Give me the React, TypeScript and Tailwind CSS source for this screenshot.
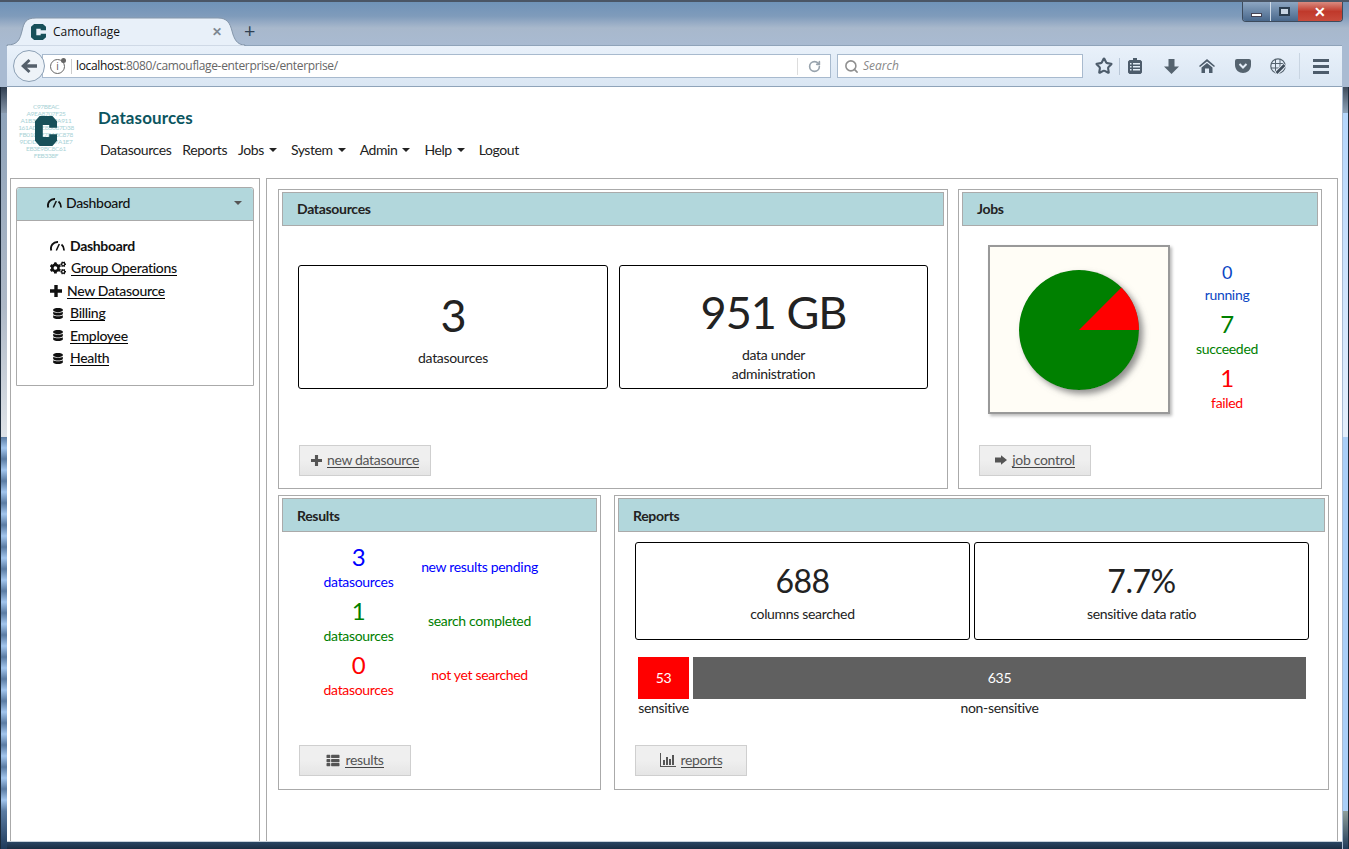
import React from 'react';
import { FaCogs, FaDatabase, FaThList } from 'react-icons/fa';
import { RotateCw, Search, Star } from 'lucide-react';

const CMark = ({ className }: { className: string }) => (
  <svg viewBox="0 0 24 28" preserveAspectRatio="none" className={className}>
    <path fill="#17505a" d="M5 0H19L24 5V11H15.500V8.500H8.500V19.500H15.500V17H24V23L19 28H5L0 23V5Z" />
  </svg>
);

const Gauge = () => (
  <svg viewBox="0 0 15 11" className="w-[15px] h-[11px] shrink-0">
    <path d="M1.300 10.500A6.500 6.500 0 0 1 8 2" fill="none" stroke="#111" strokeWidth="1.900" />
    <path d="M6.300 10.500L9.300 4" fill="none" stroke="#111" strokeWidth="1.500" />
    <path d="M11.500 4.500A6.500 6.500 0 0 1 13.800 10.500" fill="none" stroke="#111" strokeWidth="1.700" />
  </svg>
);

const PlusIcon = ({ className, color }: { className: string; color: string }) => (
  <svg viewBox="0 0 12 12" className={`shrink-0 ${className}`}>
    <path fill={color} d="M4.300 0H7.700V4.300H12V7.700H7.700V12H4.300V7.700H0V4.300H4.300Z" />
  </svg>
);

const ArrowIcon = () => (
  <svg viewBox="0 0 14 11" className="w-[12px] h-[10px] shrink-0">
    <path fill="#555" d="M0 2.500H7V0L14 5.500L7 11V8.500H0Z" />
  </svg>
);

const StatsIcon = () => (
  <svg viewBox="0 0 16 14" className="w-[16px] h-[14px] shrink-0">
    <path fill="#555" d="M0 0H1V13H16V14H0ZM3 7H5V12H3ZM6 4H8V12H6ZM9 6H11V12H9ZM12 2H14V12H12Z" />
  </svg>
);

const ClipboardIcon = () => (
  <svg viewBox="0 0 14 16" className="w-[14px] h-[16px]">
    <path fill="#4d5c6b" d="M5 0H9V2H12.500L14 3.500V14.500L12.500 16H1.500L0 14.500V3.500L1.500 2H5Z" />
    <path fill="#e4edf7" d="M2 5H3.500V6.500H2ZM5 5H12V6.500H5ZM2 8H3.500V9.500H2ZM5 8H12V9.500H5ZM2 11H3.500V12.500H2ZM5 11H12V12.500H5Z" />
  </svg>
);

const DownIcon = () => (
  <svg viewBox="0 0 15 15" className="w-[15px] h-[15px]">
    <path fill="#55636f" d="M4.500 0H10.500V7.500H15L7.500 15L0 7.500H4.500Z" />
  </svg>
);

const HomeIcon = () => (
  <svg viewBox="0 0 16 14" className="w-[16px] h-[14px]">
    <path fill="#4d5c6b" d="M8 0L16 7L15 8L8 2.500L1 8L0 7ZM8 4L13.500 8.500V14H10V9.500H6V14H2.500V8.500Z" />
  </svg>
);

const PocketIcon = () => (
  <svg viewBox="0 0 16 14" className="w-[16px] h-[14px]">
    <path fill="#55636f" d="M2 0H14Q16 0 16 2V6C16 11 12 14 8 14C4 14 0 11 0 6V2Q0 0 2 0Z" />
    <path d="M4.500 5L8 8.500L11.500 5" fill="none" stroke="#e4edf7" strokeWidth="2" />
  </svg>
);

const GlobeIcon = () => (
  <svg viewBox="0 0 16 16" className="w-[16px] h-[16px]">
    <circle cx="8" cy="8" r="7.200" fill="none" stroke="#55636f" strokeWidth="1.200" />
    <path d="M1 5.500H15M1 10H12M5.500 1V15M10 1V11" fill="none" stroke="#55636f" strokeWidth="1" />
    <path d="M6 15.500L15 6.500" fill="none" stroke="#e4edf7" strokeWidth="4.500" />
    <path d="M6.500 15L14.500 7" fill="none" stroke="#3f4d5a" strokeWidth="2.600" />
  </svg>
);

const Heading = ({ children, className = '' }: { children: React.ReactNode; className?: string }) => (
  <div className={`h-[34px] bg-[#b2d7dc] border border-[#aaa] pl-[14px] flex items-center font-bold text-[14px] text-[#222] ${className}`}>
    {children}
  </div>
);

const Panel = ({ className, children }: { className: string; children: React.ReactNode }) => (
  <div className={`border border-[#aaa] px-[3px] pt-[2px] ${className}`}>{children}</div>
);

const Btn = ({ icon, label, className }: { icon: React.ReactNode; label: string; className: string }) => (
  <div className={`h-[31px] border border-[#cfcfcf] bg-[linear-gradient(#efefef_50%,#e5e5e5)] flex items-center justify-center gap-[5px] pb-[1px] text-[14px] text-[#555] ${className}`}>
    {icon}
    <span className="border-b border-[#444] leading-[15px]">{label}</span>
  </div>
);

const StatBox = ({ value, lines, size, className }: { value: string; lines: string[]; size: string; className: string }) => (
  <div className={`border border-black rounded-[3px] flex flex-col items-center justify-center text-center ${className}`}>
    <div className={`${size} text-[#222]`}>{value}</div>
    <div className="text-[14px] leading-[19px] text-[#222]">
      {lines.map(l => <div key={l}>{l}</div>)}
    </div>
  </div>
);

const JobStat = ({ n, label, color, numClass, rowClass }: { n: string; label: string; color: string; numClass: string; rowClass: string }) => (
  <div className={`flex flex-col items-center ${rowClass} ${color}`}>
    <div className={numClass}>{n}</div>
    <div className="text-[14px] leading-[20px]">{label}</div>
  </div>
);

const ResultRow = ({ n, text, color }: { n: string; text: string; color: string }) => (
  <div className={`h-[54px] flex items-center ${color}`}>
    <div className="w-[153px] flex flex-col items-center">
      <div className="text-[24px] leading-[27px]">{n}</div>
      <div className="text-[14px] leading-[24px] mb-[3px]">datasources</div>
    </div>
    <div className="w-[131px] text-center text-[14px] whitespace-nowrap mb-[7px] ml-[-21px]">{text}</div>
  </div>
);

const SideItem = ({ icon, label, bold, gap }: { icon: React.ReactNode; label: string; bold?: boolean; gap: string }) => (
  <div className="h-[22.500px] flex items-center text-[14px] text-[#111]">
    <div className={`flex items-center ${gap}`}>
      {icon}
      {bold ? <span className="font-bold">{label}</span> : <span className="font-medium border-b border-black leading-[15px]">{label}</span>}
    </div>
  </div>
);

const navItems = ['Jobs', 'System', 'Admin', 'Help'];
const logoLines = ['C97BEAC', 'A9EA8707F25', 'A1B3CC3E59A911', '161ADCEB3087D38', 'FB010CE78A8C878', '9DDDFE9A67A1E7', 'EB3E9BC8C61', 'FEB338F'];

export default function App() {
  return (
    <div className="relative w-[1349px] h-[849px] overflow-hidden flex flex-col border-t-2 border-t-[#4a5666] bg-[linear-gradient(#6f93b8,#7f9bbb_14px,#a8b8cc_26px,#a9bbd2_45px)] bg-no-repeat" style={{ fontFamily: 'Lato, sans-serif', letterSpacing: '-0.02em' }}>
      {/* left window edge */}
      <div className="absolute left-0 top-[85px] bottom-0 w-[7px] flex flex-col border-l border-[#1c2a3a]">
        <div className="h-[26px] bg-[linear-gradient(#2f3d4f,#8797aa)]" />
        <div className="h-[324px] bg-[linear-gradient(#8fa3ba,#aeb9c7_60%,#dfe3e8)]" />
        <div className="flex-1 bg-[repeating-linear-gradient(#5b7ca3_0,#a3c6ee_11px,#5b7ca3_22px)]" />
        <div className="h-[38px] bg-[linear-gradient(#5b7ca3,#1f3a5a)]" />
      </div>
      {/* right window edge */}
      <div className="absolute right-0 top-[85px] bottom-0 w-[6px] flex flex-col border-r border-[#1c2a3a]">
        <div className="h-[26px] bg-[linear-gradient(#3f4c5c,#8ea4ba)]" />
        <div className="h-[324px] bg-[linear-gradient(#b4d6fb,#e4effb)]" />
        <div className="flex-1 bg-[#a9cff8]" />
        <div className="h-[38px] bg-[linear-gradient(#8f9f9a,#1f3a5a)]" />
      </div>

      {/* window buttons */}
      <div className="absolute top-0 right-[6px] w-[101px] h-[20px] flex border border-t-0 border-[#3d4b5c] rounded-b-[4px] overflow-hidden z-10">
        <div className="w-[28px] bg-[linear-gradient(#8da6c2,#49688c)] border-r border-[#cfdbe8] flex items-center justify-center"><div className="w-[11px] h-[4px] mt-[7px] bg-white border border-[#445]" /></div>
        <div className="w-[27px] bg-[linear-gradient(#8da6c2,#49688c)] flex items-center justify-center"><div className="w-[11px] h-[9px] border-2 border-[#2c3e50] bg-[#c8d5e3]" /></div>
        <div className="flex-1 bg-[linear-gradient(#d98b80,#c0392b_50%,#c94b3c)] flex items-center justify-center text-white font-bold text-[14px]">✕</div>
      </div>

      {/* tab strip */}
      <div className="relative z-10 h-[43px] pt-[16px] pl-[31px] flex items-start shrink-0" style={{ fontFamily: '"Open Sans", sans-serif', letterSpacing: 0 }}>
        <svg viewBox="0 0 240 29" className="absolute left-[6px] top-[15px] w-[240px] h-[29px]">
          <path d="M1 28C12 28 14 22 16 14C18 5 20 1 30 1H212C221 1 224 6 226 14C228 22 231 28 239 28V29H1Z" fill="#e8f0f9" stroke="#8496aa" strokeWidth="1" />
          <path d="M2 28.500H238V29H2Z" fill="#e8f0f9" />
        </svg>
        <div className="relative w-[191px] h-[27px] flex items-center">
          <CMark className="w-[15px] h-[16px]" />
          <span className="ml-[7px] text-[12px] text-[#111]">Camouflage</span>
          <span className="ml-auto text-[#7d8791] font-bold text-[12px]">✕</span>
        </div>
        <span className="relative ml-[22px] mt-[1px] text-[20px] leading-[24px] text-[#2f4052]">+</span>
      </div>

      {/* toolbar */}
      <div className="mx-[7px] h-[42px] shrink-0 bg-[linear-gradient(#e9f1fa,#dae6f3)] border-t border-b border-[#8fa3b9] flex items-center text-[12px]" style={{ fontFamily: '"Open Sans", sans-serif', letterSpacing: 0 }}>
        <div className="relative z-10 ml-[6px] w-[32px] h-[32px] rounded-full bg-[#eef3f8] border border-[#8ca0b5] flex items-center justify-center shrink-0">
          <svg viewBox="0 0 16 14" className="w-[16px] h-[14px]">
            <path fill="#55606b" d="M7.500 0L9.500 2L6 5.200H16V8.800H6L9.500 12L7.500 14L0 7Z" />
          </svg>
        </div>
        <div className="ml-[-3px] w-[789px] h-[24px] bg-white border border-[#a8bace] flex items-center pl-[7px] shrink-0">
          <div className="relative w-[15px] h-[15px] rounded-full border border-[#666] text-[10px] leading-[13px] text-center text-[#555]">
            i
            <div className="absolute right-[-2px] top-[-2px] w-[5px] h-[5px] rounded-full bg-[#666]" />
          </div>
          <div className="w-px h-[15px] bg-[#ccc] ml-[6px] mr-[4px]" />
          <span className="tracking-[-0.35px] text-[#111]">localhost</span><span className="tracking-[-0.35px] text-[#666]">:8080/camouflage-enterprise/enterprise/</span>
          <div className="ml-auto w-px h-[17px] bg-[#ddd]" />
          <div className="w-[32px] flex justify-center"><RotateCw size={13} strokeWidth={3} color="#98a3ad" /></div>
        </div>
        <div className="ml-[6px] w-[246px] h-[24px] bg-white border border-[#a8bace] flex items-center pl-[6px] text-[#888] italic shrink-0">
          <Search size={15} strokeWidth={2.5} color="#8f8f8f" />
          <span className="ml-[4px]">Search</span>
        </div>
        <div className="ml-[11px] w-[20px] flex justify-center shrink-0"><Star size={18} strokeWidth={2.8} color="#4d5c6b" /></div>
        <div className="ml-[5px] w-px h-[17px] bg-[#b8c6d6] shrink-0" />
        <div className="ml-[5px] w-[20px] flex justify-center shrink-0"><ClipboardIcon /></div>
        <div className="ml-[16px] w-[20px] flex justify-center shrink-0"><DownIcon /></div>
        <div className="ml-[16px] w-[20px] flex justify-center shrink-0"><HomeIcon /></div>
        <div className="ml-[16px] w-[20px] flex justify-center shrink-0"><PocketIcon /></div>
        <div className="ml-[15px] w-[20px] flex justify-center shrink-0"><GlobeIcon /></div>
        <div className="ml-[11px] w-px h-[26px] bg-[#c9d5e2] shrink-0" />
        <div className="ml-[13px] w-[16px] h-[15px] flex flex-col justify-between shrink-0">
          <div className="h-[3px] bg-[#4d5c6b]" />
          <div className="h-[3px] bg-[#4d5c6b]" />
          <div className="h-[3px] bg-[#4d5c6b]" />
        </div>
      </div>

      {/* page */}
      <div className="mx-[7px] h-[754px] shrink-0 bg-white overflow-hidden">
        <div className="h-[91px] relative">
          <div className="absolute left-[9px] top-[16px] w-[60px] h-[60px] text-[#a8d2d6] text-[6.500px] leading-[7px] text-center whitespace-nowrap overflow-hidden">
            {logoLines.map(l => <div key={l}>{l}</div>)}
            <CMark className="absolute left-[19px] top-[13px] w-[22px] h-[30px]" />
          </div>
          <div className="pl-[91px] pt-[20px]">
            <div className="text-[17px] font-bold leading-[22px] text-[#0b5560] tracking-[0.1px]">Datasources</div>
            <div className="flex mt-[11px] ml-[2px] text-[14px] leading-[20px] text-[#222] gap-[11px] tracking-[-0.03em]">
              <span>Datasources</span>
              <span>Reports</span>
              {navItems.map(n => (
                <span key={n} className="flex items-center gap-[5px] mr-[3px]">
                  {n}
                  <span className="w-0 h-0 border-x-[4px] border-x-transparent border-t-[4px] border-t-[#222]" />
                </span>
              ))}
              <span>Logout</span>
            </div>
          </div>
        </div>

        <div className="flex pl-[3px] gap-[6px]">
          {/* sidebar */}
          <div className="w-[250px] h-[680px] border border-[#aaa] pt-[8px] px-[5px] shrink-0">
            <div className="h-[199px] border border-[#aaa] rounded-t-[3px]">
              <div className="h-[33px] bg-[#b2d7dc] border-b border-[#aaa] rounded-t-[3px] flex items-center pl-[30px] pr-[11px] pb-[3px] text-[14px] font-medium text-[#111]">
                <Gauge />
                <span className="ml-[4px]">Dashboard</span>
                <span className="ml-auto w-0 h-0 border-x-[4px] border-x-transparent border-t-[4px] border-t-[#555]" />
              </div>
              <div className="pl-[33px] pt-[13.500px]">
                <SideItem icon={<Gauge />} label="Dashboard" bold gap="gap-[5px]" />
                <SideItem icon={<FaCogs className="w-[16px] h-[14px]" />} label="Group Operations" gap="gap-[5px]" />
                <SideItem icon={<PlusIcon className="w-[12px] h-[12px]" color="#111" />} label="New Datasource" gap="gap-[5px]" />
                <SideItem icon={<FaDatabase className="w-[10px] h-[11px] ml-[3px]" />} label="Billing" gap="gap-[7px]" />
                <SideItem icon={<FaDatabase className="w-[10px] h-[11px] ml-[3px]" />} label="Employee" gap="gap-[7px]" />
                <SideItem icon={<FaDatabase className="w-[10px] h-[11px] ml-[3px]" />} label="Health" gap="gap-[7px]" />
              </div>
            </div>
          </div>

          {/* main */}
          <div className="w-[1072px] h-[680px] border border-[#aaa] pl-[11px] pt-[10px]">
            <div className="flex gap-[10px]">
              <Panel className="w-[670px] h-[300px]">
                <Heading className="pb-[1px]">Datasources</Heading>
                <div className="px-[16px] pt-[39px]">
                  <div className="flex gap-[11px] h-[124px]">
                    <StatBox value="3" lines={['datasources']} size="text-[45px] leading-[63px] mb-[1px] tracking-[-1px]" className="w-[310px] pb-[4px]" />
                    <StatBox value="951 GB" lines={['data under', 'administration']} size="text-[45px] leading-[63px] mb-[1px] tracking-[-1px]" className="w-[309px] pt-[9px]" />
                  </div>
                  <Btn icon={<PlusIcon className="w-[11px] h-[11px]" color="#555" />} label="new datasource" className="w-[132px] ml-[1px] mt-[56px]" />
                </div>
              </Panel>
              <Panel className="w-[364px] h-[300px]">
                <Heading className="pb-[1px]">Jobs</Heading>
                <div className="flex pt-[19px] pl-[26px] h-[188px]">
                  <div className="w-[182px] h-[169px] bg-[#fffdf6] border-2 border-[#999] shadow-[2px_2px_3px_#bbb] flex items-center justify-center shrink-0">
                    <svg viewBox="0 0 120 120" className="w-[120px] h-[120px] overflow-visible">
                      <defs>
                        <filter id="pieShadow" x="-20%" y="-20%" width="150%" height="150%">
                          <feDropShadow dx="4" dy="4" stdDeviation="3" floodColor="#777" floodOpacity="0.8" />
                        </filter>
                      </defs>
                      <g filter="url(#pieShadow)">
                        <circle cx="60" cy="60" r="60" fill="#008000" />
                        <path d="M60 60L102.430 17.570A60 60 0 0 1 120 60Z" fill="#ff0000" />
                      </g>
                    </svg>
                  </div>
                  <div className="w-[114px] pt-[15px]">
                    <JobStat n="0" label="running" color="text-[#0a46c4]" rowClass="h-[49px]" numClass="text-[18px] leading-[24px] mb-[1px]" />
                    <JobStat n="7" label="succeeded" color="text-[#008000]" rowClass="h-[54px]" numClass="text-[24px] leading-[30px]" />
                    <JobStat n="1" label="failed" color="text-[#ff0000]" rowClass="h-[54px]" numClass="text-[24px] leading-[30px]" />
                  </div>
                </div>
                <Btn icon={<ArrowIcon />} label="job control" className="w-[112px] ml-[17px] mt-[31px]" />
              </Panel>
            </div>

            <div className="flex gap-[13px] mt-[6px]">
              <Panel className="w-[323px] h-[295px]">
                <Heading>Results</Heading>
                <div className="pt-[11px]">
                  <ResultRow n="3" text="new results pending" color="text-[#0000ff]" />
                  <ResultRow n="1" text="search completed" color="text-[#008000]" />
                  <ResultRow n="0" text="not yet searched" color="text-[#ff0000]" />
                </div>
                <Btn icon={<FaThList className="w-[14px] h-[13px] text-[#555]" />} label="results" className="w-[112px] ml-[17px] mt-[40px]" />
              </Panel>
              <Panel className="w-[715px] h-[295px]">
                <Heading>Reports</Heading>
                <div className="pl-[17px] pt-[10px]">
                  <div className="flex gap-[4px] h-[98px]">
                    <StatBox value="688" lines={['columns searched']} size="text-[32px] leading-[42px] mb-[2px] tracking-[-0.5px]" className="w-[335px]" />
                    <StatBox value="7.7%" lines={['sensitive data ratio']} size="text-[32px] leading-[42px] mb-[2px] tracking-[-0.5px]" className="w-[335px]" />
                  </div>
                  <div className="flex gap-[4px] ml-[3px] mt-[17px] w-[668px] text-[14px] text-center">
                    <div className="w-[51px]">
                      <div className="h-[42px] pb-[1px] bg-[#ff0000] text-white flex items-center justify-center">53</div>
                      <div className="leading-[18px] text-[#222] whitespace-nowrap">sensitive</div>
                    </div>
                    <div className="w-[613px]">
                      <div className="h-[42px] pb-[1px] bg-[#606060] text-white flex items-center justify-center">635</div>
                      <div className="leading-[18px] text-[#222]">non-sensitive</div>
                    </div>
                  </div>
                  <Btn icon={<StatsIcon />} label="reports" className="w-[112px] mt-[28px]" />
                </div>
              </Panel>
            </div>
          </div>
        </div>
      </div>

      {/* bottom frame */}
      <div className="flex-1 mx-[7px] bg-[linear-gradient(#c9d2dc_1px,#2a4664_1px,#1a2c42)]" />
    </div>
  );
}
